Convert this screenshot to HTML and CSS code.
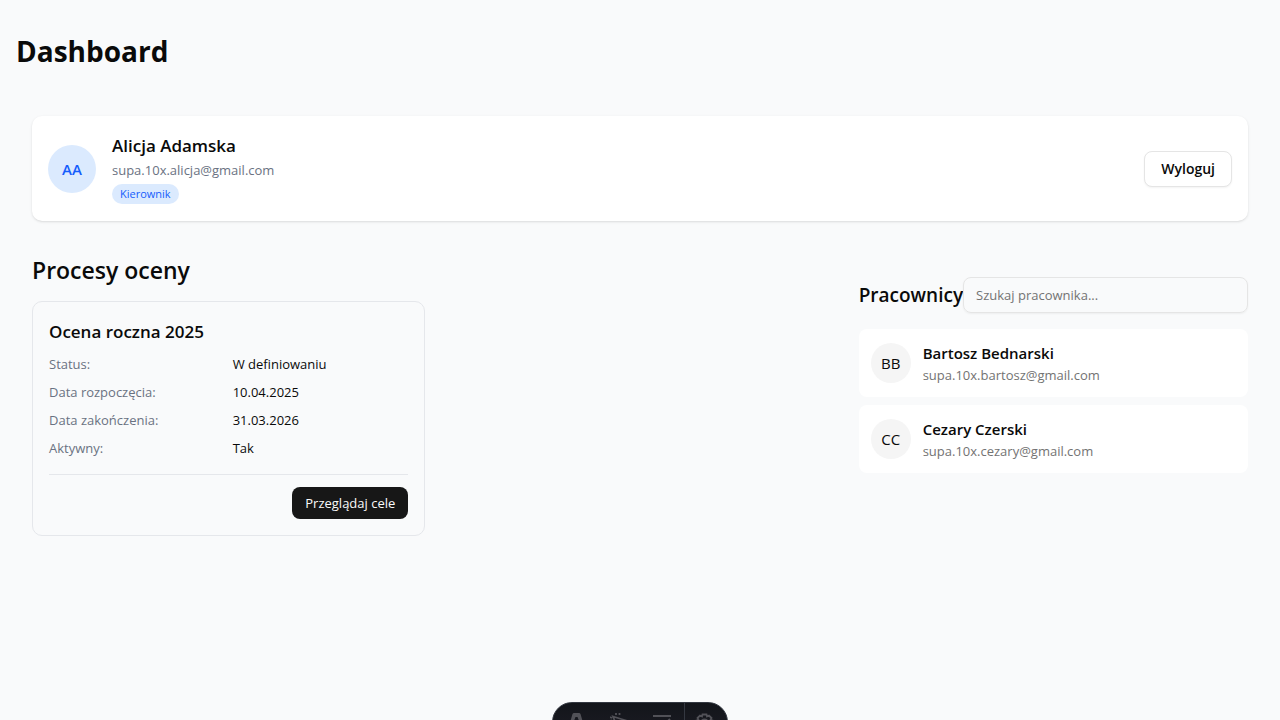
FILE: index.html
```html
<!DOCTYPE html>
<html lang="pl">
<head>
<meta charset="utf-8">
<meta name="viewport" content="width=device-width, initial-scale=1">
<title>Dashboard</title>
<link rel="stylesheet" href="styles.css">
</head>
<body>
<main class="page">
  <h1 class="page-title">Dashboard</h1>
  <div class="content">
    <section class="profile">
      <div class="avatar avatar-large">AA</div>
      <div class="profile-info">
        <h2 class="profile-name">Alicja Adamska</h2>
        <p class="profile-email">supa.10x.alicja@gmail.com</p>
        <span class="badge">Kierownik</span>
      </div>
      <button class="button button-outline" type="button">Wyloguj</button>
    </section>
    <div class="columns">
      <section class="processes">
        <h2 class="section-title">Procesy oceny</h2>
        <div class="process-grid">
          <article class="process">
            <h3 class="process-title">Ocena roczna 2025</h3>
            <dl class="details">
              <dt>Status:</dt><dd>W definiowaniu</dd>
              <dt>Data rozpoczęcia:</dt><dd>10.04.2025</dd>
              <dt>Data zakończenia:</dt><dd>31.03.2026</dd>
              <dt>Aktywny:</dt><dd>Tak</dd>
            </dl>
            <div class="process-actions">
              <button class="button button-dark" type="button">Przeglądaj cele</button>
            </div>
          </article>
        </div>
      </section>
      <section class="employees">
        <div class="employees-head">
          <h2 class="employees-title">Pracownicy</h2>
          <input class="search" type="text" placeholder="Szukaj pracownika..." aria-label="Szukaj pracownika">
        </div>
        <ul class="employee-list">
          <li class="employee">
            <div class="avatar">BB</div>
            <div>
              <p class="employee-name">Bartosz Bednarski</p>
              <p class="employee-email">supa.10x.bartosz@gmail.com</p>
            </div>
          </li>
          <li class="employee">
            <div class="avatar">CC</div>
            <div>
              <p class="employee-name">Cezary Czerski</p>
              <p class="employee-email">supa.10x.cezary@gmail.com</p>
            </div>
          </li>
        </ul>
      </section>
    </div>
  </div>
</main>
<div class="toolbar">
  <button class="tool" type="button" aria-label="Menu"><svg width="20" height="20" viewBox="0 0 20 20"><path d="M5.500 2Q6 1 7 1h5q1 0 1.500 1L17 14h-3L10.500 5h-2L5 14H2Z" fill="#515157"/></svg></button>
  <button class="tool" type="button" aria-label="Inspect"><svg width="20" height="20" viewBox="0 0 20 20" fill="none" stroke="#515157" stroke-width="1.800"><path d="M3 4.500l13 4-5.500 2L8 17zM6 1v2M9.500 1v2M0 5l2 1M0 9l2-.7"/></svg></button>
  <button class="tool" type="button" aria-label="Audit"><svg width="20" height="20" viewBox="0 0 20 20" fill="none" stroke="#515157" stroke-width="2"><path d="M0 4h18M0 10h8M11 9l2 2 4-4"/></svg></button>
  <button class="tool tool-settings" type="button" aria-label="Settings"><svg width="20" height="20" viewBox="0 0 20 20" fill="none" stroke="#515157" stroke-width="1.800"><path d="M7.500 2.500h4l.5 2 2-1 2.500 2.500-1 2 2 .5v4l-2 .5 1 2-2.500 2.500-2-1-.5 2h-4l-.5-2-2 1L2.500 15l1-2-2-.5v-4l2-.5-1-2L5 3.500l2 1z"/><circle cx="9.500" cy="10.500" r="3"/></svg></button>
</div>
</body>
</html>
```
FILE: styles.css
```css
* { box-sizing: border-box; margin: 0; padding: 0; }
body {
  min-height: 100vh;
  overflow: hidden;
  background: #f9fafb;
  color: #0a0a0a;
  font: 15px/24px "Open Sans", "Noto Sans", sans-serif;
}
.page { padding: 32px 16px; }
.page-title { margin-bottom: 30px; font-size: 28px; line-height: 38px; font-weight: 700; }
.content { padding: 16px; }
.profile {
  display: flex;
  align-items: center;
  gap: 16px;
  margin-bottom: 32px;
  padding: 16px;
  border-radius: 10px;
  background: #fff;
  box-shadow: 0 1px 3px rgba(0, 0, 0, .1), 0 1px 2px -1px rgba(0, 0, 0, .1);
}
.profile-info { flex: 1; }
.profile-name { font-size: 17px; line-height: 28px; font-weight: 600; }
.profile-email { color: #6a7282; font-size: 13px; line-height: 20px; }
.badge {
  display: block;
  width: fit-content;
  margin: 4px 0 1px;
  padding: 2px 8px;
  border-radius: 10px;
  background: #dbeafe;
  color: #155dfc;
  font-size: 11px;
  line-height: 16px;
}
.avatar {
  display: flex;
  flex: none;
  align-items: center;
  justify-content: center;
  width: 40px;
  height: 40px;
  border-radius: 50%;
  background: #f5f5f5;
}
.avatar-large { width: 48px; height: 48px; background: #dbeafe; color: #155dfc; font-weight: 600; }
.button { border: 0; border-radius: 8px; font: 13px/20px "Open Sans", "Noto Sans", sans-serif; cursor: pointer; }
.button-outline {
  padding: 7px 16px;
  border: 1px solid #e5e5e5;
  background: #fff;
  color: #0a0a0a;
  font-size: 14px;
  font-weight: 600;
  box-shadow: 0 1px 2px rgba(0, 0, 0, .05);
}
.button-dark { padding: 6px 13px; background: #171717; color: #fafafa; }
.columns { display: grid; grid-template-columns: repeat(3, 1fr); gap: 24px; }
.processes { grid-column: span 2; }
.section-title { margin-bottom: 14px; font-size: 23px; line-height: 34px; font-weight: 600; }
.process-grid { display: grid; grid-template-columns: 1fr 1fr; gap: 16px; }
.process { padding: 16px; border: 1px solid #e5e7eb; border-radius: 10px; }
.process-title { margin-bottom: 8px; font-size: 17px; line-height: 28px; font-weight: 600; }
.details { display: grid; grid-template-columns: 1fr 1fr; gap: 8px; font-size: 13px; line-height: 20px; }
.details dt { color: #6a7282; }
.process-actions { display: flex; justify-content: flex-end; margin-top: 16px; padding-top: 12px; border-top: 1px solid #e5e7eb; }
.employees { padding-top: 24px; }
.employees-head { display: flex; align-items: center; margin-bottom: 16px; }
.employees-title { font-size: 19px; line-height: 28px; font-weight: 600; }
.search {
  flex: 1;
  min-width: 0;
  height: 36px;
  padding: 4px 12px;
  border: 1px solid #e5e5e5;
  border-radius: 8px;
  background: transparent;
  font: 13px/20px "Open Sans", "Noto Sans", sans-serif;
  box-shadow: 0 1px 2px rgba(0, 0, 0, .05);
}
.search::placeholder { color: #737373; opacity: 1; }
.employee-list { display: grid; gap: 8px; list-style: none; }
.employee { display: flex; align-items: center; gap: 12px; padding: 12px; border-radius: 8px; background: #fff; }
.employee-name { font-weight: 600; }
.employee-email { color: #737373; font-size: 13px; line-height: 20px; }
.toolbar {
  position: fixed;
  bottom: -22px;
  left: 50%;
  display: flex;
  height: 40px;
  padding: 0 2px;
  overflow: hidden;
  border: 1px solid #343841;
  border-radius: 20px;
  background: linear-gradient(#13151a, #1d1d26);
  transform: translateX(-50%);
}
.tool { display: flex; justify-content: center; width: 43px; padding-top: 9px; border: 0; background: none; }
.tool-settings { width: 41px; border-left: 1px solid #343841; }
```
